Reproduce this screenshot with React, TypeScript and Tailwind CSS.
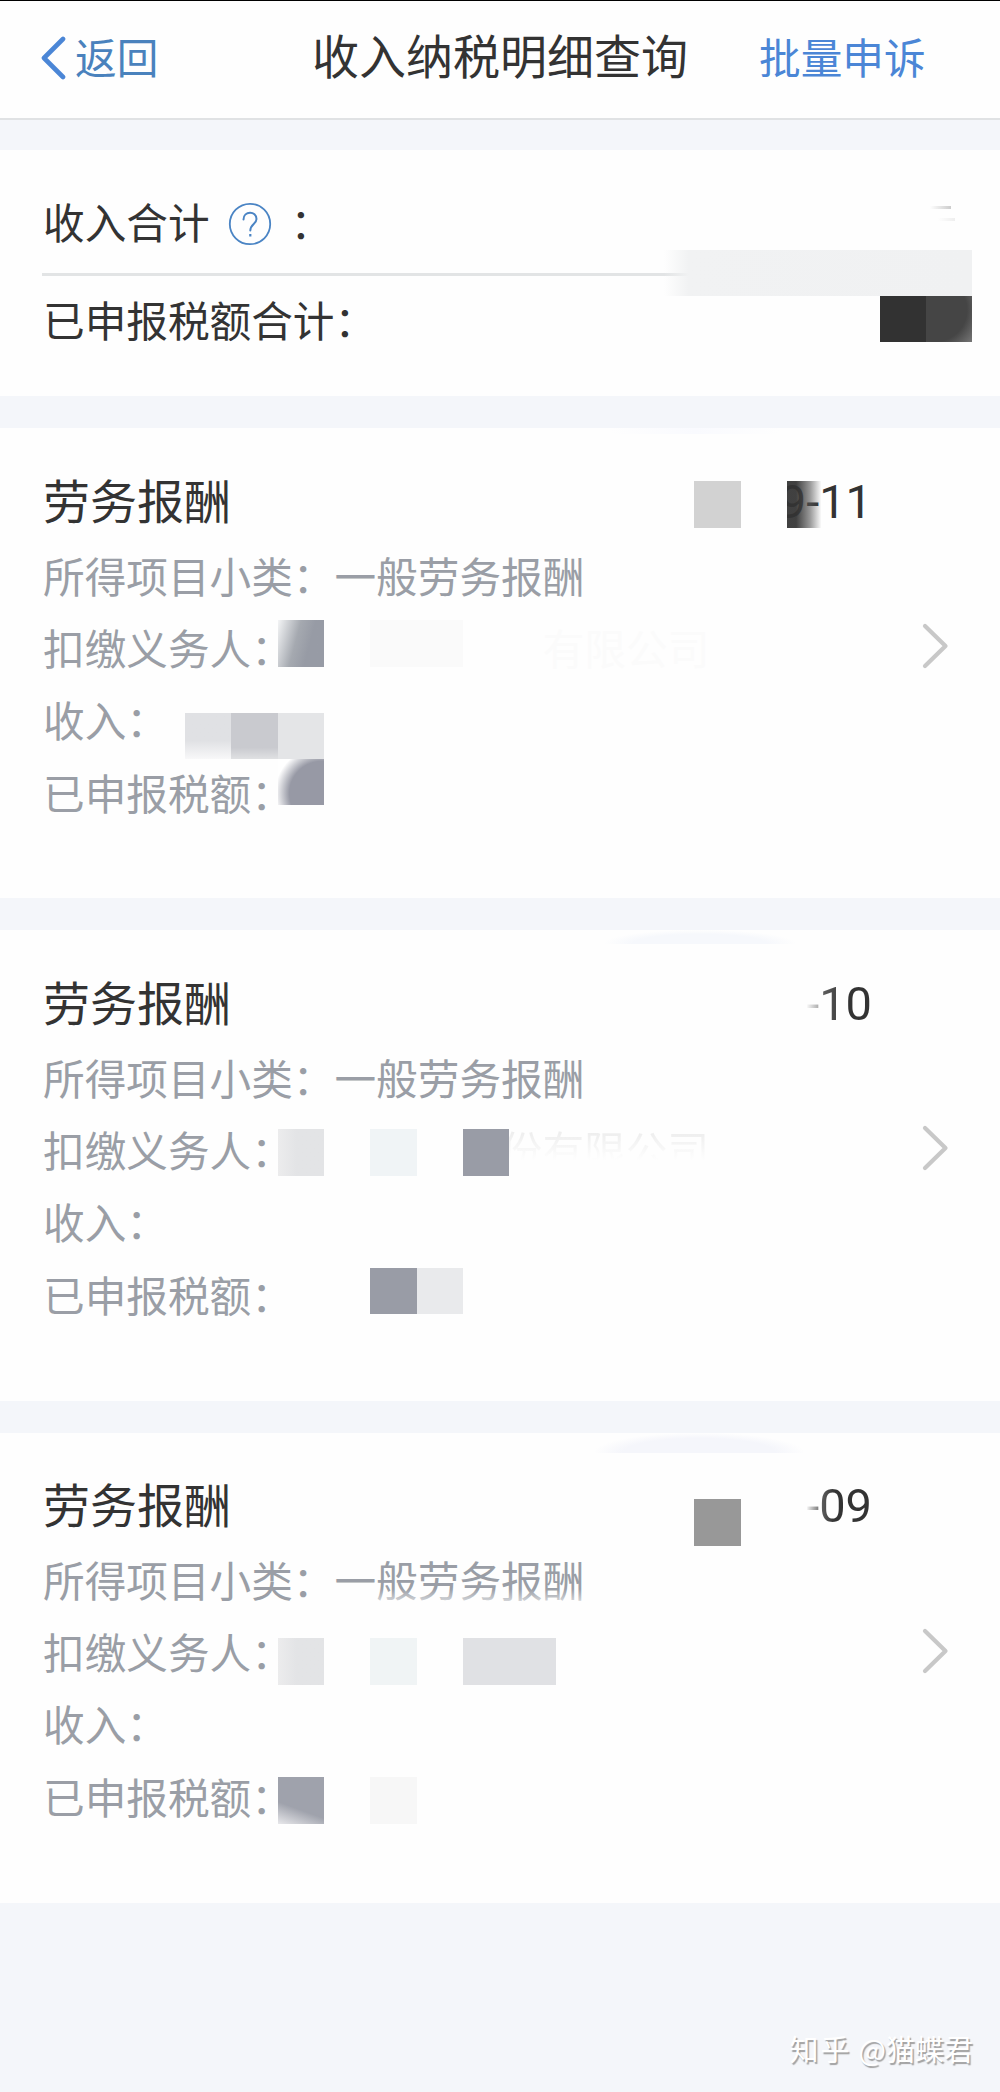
import clsx from "clsx";

interface IncomeRecord {
  id: number;
  title: string;
  category: string;
  date: React.ReactNode;
  company: React.ReactNode;
  spacing: string;
  masks: string[];
}

const records: IncomeRecord[] = [
  {
    id: 11,
    title: "劳务报酬",
    category: "一般劳务报酬",
    date: "9-11",
    company: <span className="ml-[250px] text-[#fbfbfb]">有限公司</span>,
    spacing: "mt-8 h-[470px] pt-[41px]",
    masks: [
      "left-[610px] top-0 h-[6px] w-[170px] bg-linear-to-r from-transparent via-[#f9fafe] to-transparent",
      "left-[694px] top-[53px] h-[47px] w-[47px] bg-[#d2d2d2]",
      "left-[776px] top-[50px] h-[50px] w-[11px] bg-[#fefefe]",
      "left-[787px] top-[53px] h-[47px] w-[46px] bg-linear-to-r from-[#333333ee] from-20% via-[#55555599] via-50% to-transparent to-75%",
      "left-[278px] top-[192px] h-[47px] w-[46px] bg-linear-105 from-[#f4f5f6] via-[#a5a9b0] via-40% to-[#979ba5] to-65%",
      "left-[370px] top-[192px] h-[47px] w-[93px] bg-[#fafafa]",
      "left-[185px] top-[285px] h-[46px] w-[46px] bg-linear-to-b from-[#e0e1e4] from-60% to-[#f8f8f9]",
      "left-[231px] top-[285px] h-[46px] w-[47px] bg-linear-to-b from-[#c9cacf] from-75% to-[#e0e1e3]",
      "left-[278px] top-[285px] h-[46px] w-[46px] bg-[#e4e5e7]",
      "left-[278px] top-[331px] h-[46px] w-[46px] bg-[radial-gradient(circle_at_95%_75%,#9799a5_58%,#ffffff_84%)]",
    ],
  },
  {
    id: 10,
    title: "劳务报酬",
    category: "一般劳务报酬",
    date: (
      <>
        <span className="bg-linear-to-r from-white to-[#aaaaaa] bg-clip-text text-transparent">-</span>
        <span className="bg-linear-to-r from-[#666666] to-[#333333] to-50% bg-clip-text text-transparent">10</span>
      </>
    ),
    company: (
      <span className="ml-[208px] bg-linear-to-b from-[#ededed] from-25% to-[#fefefe] to-65% bg-clip-text text-transparent">
        份有限公司
      </span>
    ),
    spacing: "mt-8 h-[471px] pt-[41px]",
    masks: [
      "left-[605px] top-0 h-[14px] w-[190px] bg-[radial-gradient(ellipse_at_bottom,#f6f8fc_50%,transparent_72%)]",
      "left-[278px] top-[199px] h-[47px] w-[46px] bg-linear-to-r from-[#ececed] to-[#e3e4e6] to-40%",
      "left-[370px] top-[199px] h-[47px] w-[47px] bg-[#f0f4f6]",
      "left-[463px] top-[199px] h-[47px] w-[46px] bg-[#999ca6]",
      "left-[370px] top-[338px] h-[46px] w-[47px] bg-[#999ca6]",
      "left-[417px] top-[338px] h-[46px] w-[46px] bg-[#e9eaec]",
    ],
  },
  {
    id: 9,
    title: "劳务报酬",
    category: "一般劳务报酬",
    date: (
      <>
        <span className="bg-linear-to-r from-white to-[#777777] bg-clip-text text-transparent">-</span>
        <span className="bg-linear-to-r from-[#666666] to-[#333333] to-30% bg-clip-text text-transparent">09</span>
      </>
    ),
    company: null,
    spacing: "mt-8 h-[470px] pt-[40px]",
    masks: [
      "left-[595px] top-0 h-[20px] w-[208px] bg-[radial-gradient(ellipse_at_bottom,#f5f6fb_52%,transparent_72%)]",
      "left-[694px] top-[66px] h-[47px] w-[47px] bg-[#989898]",
      "left-[370px] top-[156px] h-[13px] w-[213px] bg-linear-to-b from-transparent to-[#fefefe99]",
      "left-[278px] top-[205px] h-[47px] w-[46px] bg-linear-to-r from-[#ececed] to-[#e3e4e6] to-40%",
      "left-[370px] top-[205px] h-[47px] w-[47px] bg-[#f0f4f5]",
      "left-[463px] top-[205px] h-[47px] w-[93px] bg-[#e0e1e4]",
      "left-[278px] top-[344px] h-[47px] w-[46px] bg-linear-[20deg] from-[#e8e8eb] to-[#9fa2ac] to-35%",
      "left-[370px] top-[344px] h-[47px] w-[47px] bg-[#f7f7f7]",
    ],
  },
];

export default function App() {
  return (
    <div className="flex h-[2092px] w-[1000px] flex-col overflow-hidden bg-[#f4f6fa] font-['Noto_Sans_CJK_SC',sans-serif] text-[41.65px] text-[#333333]">
      <Header />
      <Summary />
      {records.map((record) => (
        <RecordCard key={record.id} record={record} />
      ))}
      <footer className="flex flex-1 items-end justify-end pr-[27px] pb-[23px] text-[29px] leading-[42px] text-white [text-shadow:1.5px_1.5px_1px_#a0a0a0]">
        <span className="mr-[7px] tracking-[2px]">知乎</span>
        <span>@猫蝶君</span>
      </footer>
    </div>
  );
}

function Header() {
  return (
    <header className="flex h-[120px] shrink-0 items-center border-t border-b-2 border-t-black border-b-[#e0e2e4] bg-[#fefefe] pb-[8px] leading-[60px]">
      <button className="flex w-[312px] items-center pl-[40px] text-[#4a82bd]">
        <svg className="mt-[5px] mr-[9px] h-[44px] w-[26px]" viewBox="0 0 26 44" fill="none">
          <path d="M23 3 L4 22 L23 41" stroke="#4b86d6" strokeWidth="4.6" strokeLinecap="round" strokeLinejoin="round" />
        </svg>
        返回
      </button>
      <h1 className="w-[376px] pb-[4px] text-[47px]">收入纳税明细查询</h1>
      <button className="ml-[71px] text-[#4b86d6]">批量申诉</button>
    </header>
  );
}

function Summary() {
  return (
    <section className="relative mt-[30px] h-[246px] shrink-0 bg-[#fefefe] pt-[41px] pl-[42px] leading-[60px]">
      <div className="flex h-[85px] items-start border-b-3 border-[#e2e4e5] pl-px">
        收入合计
        <svg className="mt-[11px] ml-[18px] h-[44px] w-[44px]" viewBox="0 0 44 44" fill="none" stroke="#4a84c4">
          <circle cx="22" cy="22" r="20.2" strokeWidth="1.8" />
          <path d="M15.5 17.5 C15.5 8.5 28.5 8.5 28.5 17 C28.5 22 22.3 22 22.3 28.5" strokeWidth="2" strokeLinecap="round" />
          <path d="M22.3 32 V34.5" strokeWidth="2.2" />
        </svg>
        <span className="ml-[19px]">：</span>
      </div>
      <div className="pt-[13px] pl-px">已申报税额合计：</div>

      <Mask className="left-[930px] top-[56px] h-[3px] w-[21px] bg-linear-to-r from-transparent to-[#cccccc]" />
      <Mask className="left-[938px] top-[68px] h-[3px] w-[17px] bg-linear-to-r from-transparent to-[#eeeeee]" />
      <Mask className="left-[972px] top-[120px] h-[10px] w-[28px] bg-[#fefefe]" />
      <Mask className="left-[664px] top-[100px] h-[46px] w-[308px] bg-linear-to-r from-transparent via-[#f1f2f3] via-8% to-[#f0f1f2]" />
      <Mask className="left-[880px] top-[146px] h-[46px] w-[46px] bg-[#323232]" />
      <Mask className="left-[926px] top-[146px] h-[46px] w-[46px] bg-[radial-gradient(circle_at_20%_30%,#454545_65%,#777777_100%)]" />
    </section>
  );
}

function RecordCard({ record }: { record: IncomeRecord }) {
  return (
    <section className={clsx("relative shrink-0 bg-[#fefefe] pl-[43px]", record.spacing)}>
      <div className="flex h-[70px] justify-between pr-[128px] text-[47px] leading-[60px]">
        <h2>{record.title}</h2>
        <span className="pt-[3px] font-['Roboto',sans-serif]">{record.date}</span>
      </div>
      <div className="leading-[72.2px] text-[#9a9ea6]">
        <p>所得项目小类：{record.category}</p>
        <p className="flex">扣缴义务人：{record.company}</p>
        <p>收入：</p>
        <p>已申报税额：</p>
      </div>

      <svg className="absolute top-[194px] left-[920px] h-[48px] w-[30px]" viewBox="0 0 30 48" fill="none">
        <path d="M5 4 L25.5 24 L5 44" stroke="#c8c8c8" strokeWidth="4.2" strokeLinecap="round" strokeLinejoin="round" />
      </svg>

      {record.masks.map((mask) => (
        <Mask key={mask} className={mask} />
      ))}
    </section>
  );
}

// blurred-out block over private values
function Mask({ className }: { className: string }) {
  return <div className={clsx("absolute", className)} />;
}
